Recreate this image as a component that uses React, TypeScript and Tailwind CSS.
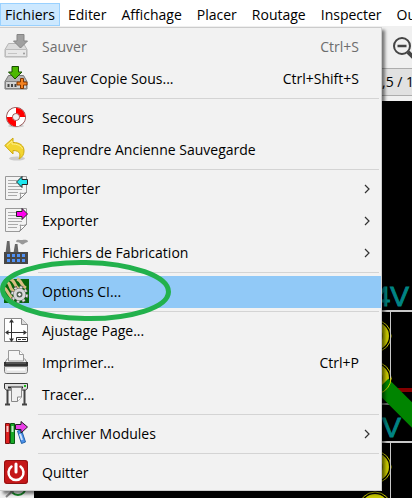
import type { ReactNode } from 'react';

type MenuEntry = {
  label: string;
  icon: ReactNode;
  shortcut?: string;
  submenu?: boolean;
  disabled?: boolean;
  active?: boolean;
};

const menus = ['Fichiers', 'Editer', 'Affichage', 'Placer', 'Routage', 'Inspecter', 'Outils'];

function DriveIcon({ copy = false }: { copy?: boolean }) {
  return (
    <>
      <path
        d="M4.5 9.500h15l3.500 6v7.500h-22v-7.500z"
        fill={copy ? '#b4b4b4' : '#dcdcdc'}
        stroke={copy ? '#777' : '#b5b5b5'}
      />
      <path d="M1.500 15.500h21v7h-21z" fill={copy ? '#d2d2d2' : '#e8e8e8'} stroke={copy ? '#858585' : '#bcbcbc'} />
      {copy ? (
        <path d="M3.500 18h2v3h-2zM7 18h2v3H7zM10.500 18h2v3h-2z" fill="#444" />
      ) : (
        <>
          <path d="M4 19.500h9" stroke="#c4c4c4" />
          <circle cx="20" cy="19.500" r="1" fill="#999" />
        </>
      )}
      {copy ? (
        <path d="M8 .5h6.500V6H18l-7 7-6.500-7H8z" fill="#4cb800" stroke="#174b00" />
      ) : (
        <path d="M13 .5h7V7h3.500L16.500 14 9.500 7H13z" fill="#a0a0a0" stroke="#858585" />
      )}
      {copy && (
        <path d="M16.500 12.500h3V16H23v3h-3.500v3.500h-3V19H13v-3h3.500z" fill="#f58220" stroke="#803600" />
      )}
    </>
  );
}

function LifebuoyIcon() {
  return (
    <>
      <ellipse cx="12" cy="21" rx="8" ry="1.500" fill="#ccc" />
      <circle cx="12" cy="12" r="6.500" fill="none" stroke="#8a4040" strokeWidth="7" />
      <circle cx="12" cy="12" r="6.500" fill="none" stroke="#fff" strokeWidth="5.500" />
      <path
        d="M12 5.500a6.500 6.500 0 0 1 6.500 6.500M12 18.500a6.500 6.500 0 0 1-6.500-6.500"
        fill="none"
        stroke="#f00"
        strokeWidth="5.500"
      />
    </>
  );
}

function UndoIcon() {
  return (
    <>
      <ellipse cx="13" cy="21.500" rx="8" ry="2" fill="#ccc" />
      <path
        d="M.8 8.500 9 1v4.500c7 0 11 3 11 8.500 0 3.500-1.500 6-5 8 1.500-3.500 2-8.500-6-8.500V17z"
        fill="#f3d531"
        stroke="#cda910"
      />
      <path d="M3 8.500 8 4v3c5 0 9 1.500 10.500 5" fill="none" stroke="#fff08a" />
    </>
  );
}

function SheetIcon({ out = false }: { out?: boolean }) {
  return (
    <>
      <path d="M1.500 .5h21v16l-7 7h-14z" fill="#f3f3f3" stroke="#999" />
      <path d="M15.500 23.500c1.500-2 1.500-4.500.5-6.500 2.500.8 4.500.5 6.500-.5z" fill="#fff" stroke="#888" />
      <path d="M4 4.500h9M4 7.500h9M4 10.500h13M4 13.500h14M4 16.500h10M4 19.500h9" stroke="#aaa" />
      {out ? (
        <path d="M12.500 3.500H18V.500l5.500 5.500-5.500 5.500v-3h-5.500z" fill="#f0e" stroke="#222" />
      ) : (
        <path d="M23.500 3.500H18V.500L12.500 6l5.500 5.500v-3h5.500z" fill="#1ee6ee" stroke="#222" />
      )}
    </>
  );
}

function FactoryIcon() {
  return (
    <>
      <path d="M3 1h2.500l1 12h-5zM11 4h2.500l1 9h-5z" fill="#666" />
      <path d="M12 1c1-2 4-1 5-1s6-1 7 1c0 2-3 1-4 3-2 1-3 0-4-1s-4 0-4-2z" fill="#999" />
      <path d="M0 12h24v12H0z" fill="#474747" />
      <path
        d="M3 14h3v3H3zM8 14h3v3H8zM13 14h3v3h-3zM18 14h3v3h-3zM3 19h3v3H3zM8 19h3v3H8zM13 19h3v3h-3zM18 19h3v3h-3z"
        fill="#4f91f5"
      />
    </>
  );
}

function BoardIcon() {
  return (
    <>
      <path d="M0 0h25v24H0z" fill="#08650b" />
      <path
        d="M0 2c4 0 5 2 6 5s2 5 5 6M6 0c4 1 4 4 6 7s3 3 5 4M13 0c3 1 4 3 5 5s2 3 4 4M0 9c3 1 3 4 5 6s3 4 4 8"
        fill="none"
        stroke="#d8bd82"
        strokeWidth="3"
      />
      <circle cx="15.500" cy="15.500" r="7" fill="none" stroke="#555" strokeWidth="4" strokeDasharray="3 2.500" />
      <circle cx="15.500" cy="15.500" r="7" fill="none" stroke="#ddd" strokeWidth="2.500" strokeDasharray="2.500 3" />
      <circle cx="15.500" cy="15.500" r="4.500" fill="none" stroke="#666" strokeWidth="4" />
      <circle cx="15.500" cy="15.500" r="4.500" fill="none" stroke="#d8d8d8" strokeWidth="3" />
      <circle cx="15.500" cy="15.500" r="2" fill="#eee" stroke="#555" />
    </>
  );
}

function PageSizeIcon() {
  return (
    <>
      <path d="M.5.500h17l6 6v17H.500z" fill="#fff" stroke="#888" />
      <path d="M17.500.500v6h6" fill="#ddd" stroke="#888" />
      <path d="M7.500 2v21M2 14.500h20" stroke="#333" />
      <path d="M7.500 1 5 4.500h5zM7.500 24 5 20.500h5zM1 14.500 4.500 12v5zM23 14.500 19.500 12v5z" fill="#333" />
      <path d="M12.500 19.500h11v4h-11zM14 21.500h3M18 21.500h4" fill="#fff" stroke="#333" />
    </>
  );
}

function PrinterIcon() {
  return (
    <>
      <path d="M4.500 11V.500h11l4 4V11z" fill="#f5f5f5" stroke="#999" />
      <path d="M15.500.500v4h4" fill="#fff" stroke="#999" />
      <path d="M3.500 8.500 1 12.500v4h22v-4l-2.500-4" fill="none" stroke="#888" />
      <path d="M0 12h24v4.500H0z" fill="#333" />
      <path d="M2 13h20" stroke="#777" />
      <path d="M.500 16.500h23v5c0 1-1 2-2 2h-19c-1 0-2-1-2-2z" fill="#e5e5e5" stroke="#777" />
      <path d="M3 19.500h18" stroke="#fff" strokeWidth="2" />
    </>
  );
}

function PlotterIcon() {
  return (
    <>
      <path d="M3.500 7v15M20.500 7v15M1 22.500h5M18 22.500h5" stroke="#444" strokeWidth="2" />
      <path d="M.500 1.500h23v5l-2 1.500H2.500l-2-1.500z" fill="#ddd" stroke="#333" />
      <path d="M4 5.500h15" stroke="#222" strokeWidth="2" />
      <path d="M7.500 5.500h10V15l-4 4.500h-6z" fill="#f0f0f0" stroke="#888" />
      <path d="M13.500 19.500V15h4" fill="#fff" stroke="#888" />
      <path d="M20 3h2v2h-2z" fill="#19bd16" />
    </>
  );
}

function ArchiveIcon() {
  return (
    <>
      <path d="M1.500 2.500h4v20h-4z" fill="#df2020" stroke="#761010" />
      <path d="M6.500 2.500h4v20h-4z" fill="#18a927" stroke="#095811" />
      <path d="m13.500 10 4-1 4 12-4 1.500z" fill="#4b91ed" stroke="#2462a7" />
      <path d="M3.500 5v6M8.500 5v6M16 13l2 6" stroke="#fff" strokeWidth="2" opacity=".75" />
      <path d="M11.500 3.500H17V.500l6.500 5.500-6.500 6V8.500h-5.500z" fill="#e93fe6" stroke="#222" />
    </>
  );
}

function PowerIcon() {
  return (
    <>
      <rect width="24" height="24" rx="3" fill="#c51718" />
      <rect x=".5" y=".5" width="23" height="23" rx="3" fill="none" stroke="#8d1111" />
      <path d="M7.500 6.500a7.500 7.500 0 1 0 9 0" fill="none" stroke="#fff" strokeWidth="2.500" strokeLinecap="round" />
      <path d="M12 4v8" stroke="#fff" strokeWidth="3" strokeLinecap="round" />
    </>
  );
}

const groups: MenuEntry[][] = [
  [
    { label: 'Sauver', icon: <DriveIcon />, shortcut: 'Ctrl+S', disabled: true },
    { label: 'Sauver Copie Sous...', icon: <DriveIcon copy />, shortcut: 'Ctrl+Shift+S' },
  ],
  [
    { label: 'Secours', icon: <LifebuoyIcon /> },
    { label: 'Reprendre Ancienne Sauvegarde', icon: <UndoIcon /> },
  ],
  [
    { label: 'Importer', icon: <SheetIcon />, submenu: true },
    { label: 'Exporter', icon: <SheetIcon out />, submenu: true },
    { label: 'Fichiers de Fabrication', icon: <FactoryIcon />, submenu: true },
  ],
  [{ label: 'Options CI...', icon: <BoardIcon />, active: true }],
  [
    { label: 'Ajustage Page...', icon: <PageSizeIcon /> },
    { label: 'Imprimer...', icon: <PrinterIcon />, shortcut: 'Ctrl+P' },
    { label: 'Tracer...', icon: <PlotterIcon /> },
  ],
  [{ label: 'Archiver Modules', icon: <ArchiveIcon />, submenu: true }],
  [{ label: 'Quitter', icon: <PowerIcon /> }],
];

function MenuItem({ entry }: { entry: MenuEntry }) {
  return (
    <button
      type="button"
      role="menuitem"
      disabled={entry.disabled}
      className={`flex h-8 w-full items-center pl-1 text-left ${entry.active ? 'bg-[#91c9f7]' : ''} ${
        entry.disabled ? 'text-[#6d6d6d]' : 'text-black'
      }`}
    >
      <svg className="mr-3.5 mb-0.5 h-6 w-6 shrink-0 overflow-visible" viewBox="0 0 24 24" aria-hidden="true">
        {entry.icon}
      </svg>
      <span className="flex-1">{entry.label}</span>
      {entry.shortcut && <span className="mr-[22px]">{entry.shortcut}</span>}
      {entry.submenu && (
        <svg className="mr-2.5 h-3 w-2" viewBox="0 0 8 12" aria-hidden="true">
          <path d="m2 2 4 4-4 4" fill="none" stroke="#333" strokeWidth="1.2" />
        </svg>
      )}
    </button>
  );
}

function Pad({ cy }: { cy: number }) {
  return (
    <g>
      <circle cx="375" cy={cy} r="16" fill="none" stroke="#d0d000" />
      <circle cx="375" cy={cy} r="14" fill="#c8c800" />
      <circle cx="375" cy={cy} r="8" fill="#848400" />
    </g>
  );
}

function Board() {
  return (
    <svg className="h-full w-full" aria-hidden="true">
      <g transform="translate(-34 -101)">
        <path d="M360 311h400M360 442h400" stroke="#c8c8c8" strokeWidth="2" />
        <path d="M397 390h300" stroke="#840000" strokeWidth="4" />
        <g fill="#008484" fontFamily="'Liberation Sans', sans-serif" fontSize="28" stroke="#008484" textAnchor="end">
          <text x="409" y="306">24V</text>
          <text x="401" y="437">15V</text>
        </g>
        <Pad cy={336} />
        <Pad cy={378} />
        <Pad cy={467} />
        <Pad cy={508} />
        <path d="M390.500 312v92H360M390.500 443v200" fill="none" stroke="#c8c8c8" />
        <path d="m382 385 60 60" stroke="#008400" strokeWidth="18" />
        <path d="M391 378a16 16 0 0 1-12 15.500" fill="none" stroke="#d0d000" />
      </g>
    </svg>
  );
}

export default function App() {
  return (
    <div className="relative flex h-screen flex-col overflow-hidden bg-[#f0f0f0] font-['Open_Sans',sans-serif] text-sm text-black">
      <nav className="flex h-[26px] shrink-0 gap-px bg-white pt-[3px]" aria-label="Menu">
        {menus.map((menu) => (
          <button
            key={menu}
            type="button"
            className={`shrink-0 pt-px ${
              menu === 'Fichiers'
                ? 'w-[60px] border border-[#99d1ff] bg-[#cce8ff]'
                : 'px-[7px]'
            }`}
          >
            {menu}
          </button>
        ))}
      </nav>

      <div className="flex h-[42px] shrink-0 items-center pl-[393px]">
        <button type="button" aria-label="Zoom" className="shrink-0">
          <svg className="h-6 w-6" viewBox="0 0 24 24" fill="none" stroke="#444" aria-hidden="true">
            <circle cx="9" cy="11" r="8" strokeWidth="2" />
            <path d="M4.500 11h9" strokeWidth="2.500" />
            <path d="m15 17 6 6" strokeWidth="4" />
          </svg>
        </button>
      </div>
      <div className="mb-[5px] flex h-7 shrink-0 items-center justify-start overflow-hidden border-y border-[#adadad] bg-[#e1e1e1] pl-[374px] whitespace-nowrap">
        1,5 / 1,5
      </div>

      <div className="flex min-h-0 flex-1">
        <div className="flex w-[34px] shrink-0 items-end justify-center overflow-hidden">
          <svg className="h-6 w-6" viewBox="0 0 24 24" fill="none" aria-hidden="true">
            <circle cx="13" cy="13" r="8" stroke="#178b28" strokeWidth="2" />
            <path d="m1 23 9-8h8" stroke="#888" strokeWidth="2" />
          </svg>
        </div>
        <div className="min-w-0 flex-1 bg-black">
          <Board />
        </div>
      </div>

      <div
        role="menu"
        aria-label="Fichiers"
        className="absolute top-[27px] left-0 w-[382px] border-t border-r border-b border-[#ccc] bg-[#f2f2f2] pt-[3px] pb-px shadow-[3px_3px_3px_rgba(0,0,0,0.5)]"
      >
        {groups.map((group, index) => (
          <div key={group[0].label}>
            {index > 0 && (
              <div role="separator" className="flex h-[7px] items-center pr-0.5 pl-[38px]">
                <div className="h-px w-full bg-[#d4d4d4]" />
              </div>
            )}
            {group.map((entry) => (
              <MenuItem key={entry.label} entry={entry} />
            ))}
          </div>
        ))}
      </div>

      <svg
        className="pointer-events-none absolute top-[258px] left-0 h-16 w-44"
        viewBox="0 0 176 64"
        aria-hidden="true"
      >
        <ellipse
          cx="85.500"
          cy="32.500"
          rx="83"
          ry="28"
          fill="none"
          stroke="#22b14c"
          strokeWidth="5"
          transform="rotate(1 85.500 32.500)"
        />
      </svg>
    </div>
  );
}
